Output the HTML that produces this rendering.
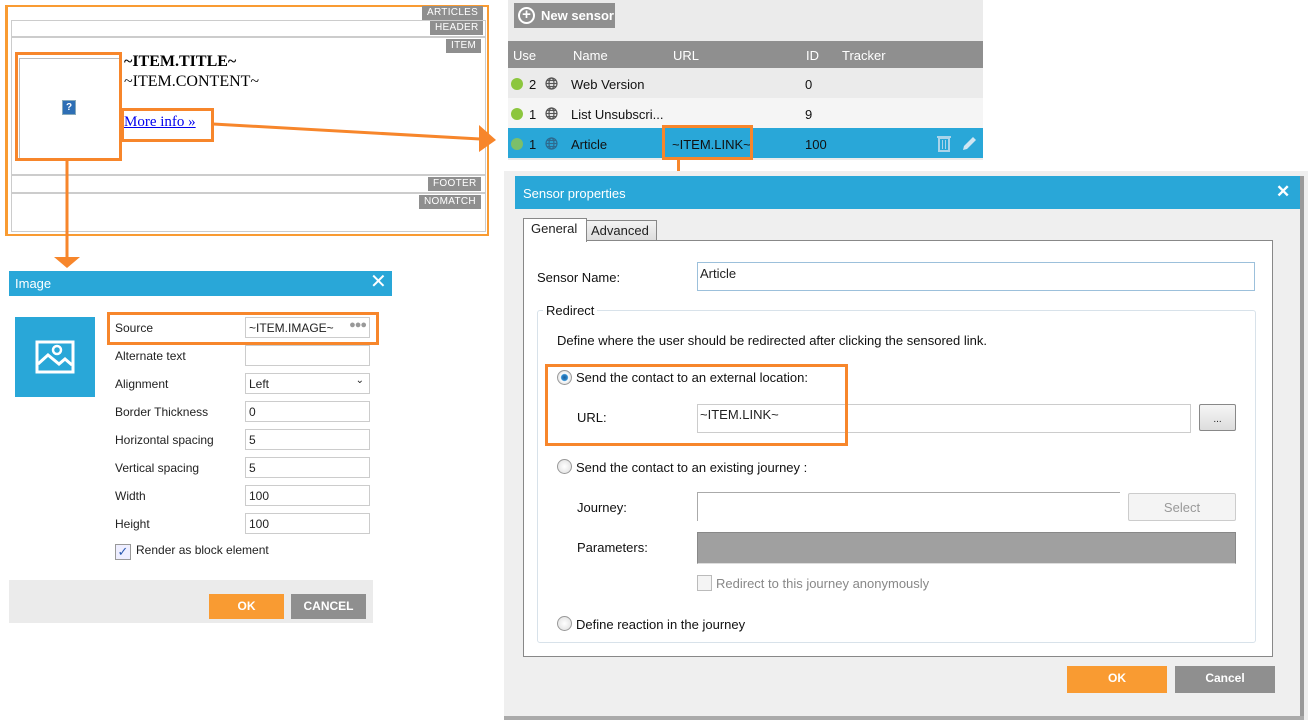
<!DOCTYPE html>
<html><head><meta charset="utf-8"><style>
*{margin:0;padding:0;box-sizing:border-box}
body{width:1308px;height:720px;background:#fff;position:relative;overflow:hidden;font-family:"Liberation Sans",sans-serif;font-size:12px;color:#222}
.a{position:absolute}
.tag{position:absolute;background:#8f8f8f;color:#fff;font-size:10px;height:14px;line-height:14px;padding:0 5px;letter-spacing:.3px}
.ser{font-family:"Liberation Serif",serif}
.lbl{position:absolute;left:115px;font-size:12px;color:#222}
.inp{position:absolute;left:245px;width:125px;height:21px;border:1px solid #ccc;font-size:12px;padding:3px 3px;background:#fff}
.obox{position:absolute;border:3px solid #f7862b}
.s{font-size:13px;color:#111}
.radio{position:absolute;width:15px;height:15px;border-radius:50%;border:1px solid #999;background:radial-gradient(#fff,#ddd)}
</style></head><body>

<div class="a" style="left:5px;top:5px;width:484px;height:231px;border:2px solid #f99b32;border-left-width:3px"></div>
<div class="tag" style="left:422px;top:6px">ARTICLES</div>
<div class="a" style="left:11px;top:20px;width:475px;height:18px;border:1px solid #ccc;border-bottom-width:2px"></div>
<div class="tag" style="left:430px;top:21px">HEADER</div>
<div class="a" style="left:11px;top:38px;width:475px;height:138px;border:1px solid #ccc;border-top:none;border-bottom-width:2px"></div>
<div class="tag" style="left:446px;top:39px">ITEM</div>
<div class="a" style="left:11px;top:176px;width:475px;height:18px;border:1px solid #ccc;border-top:none;border-bottom-width:2px"></div>
<div class="tag" style="left:428px;top:177px">FOOTER</div>
<div class="a" style="left:11px;top:194px;width:475px;height:38px;border:1px solid #ccc;border-top:none"></div>
<div class="tag" style="left:419px;top:195px">NOMATCH</div>
<div class="a" style="left:19px;top:58px;width:100px;height:100px;border:1px solid #bbb;border-right:none;border-bottom:none"></div>
<div class="a" style="left:62px;top:100px;width:14px;height:15px;background:#2e6fb5;border:1px solid #8ab;color:#fff;font-size:10px;font-weight:bold;text-align:center;line-height:13px">?</div>
<div class="obox" style="left:15px;top:52px;width:107px;height:109px"></div>
<div class="a ser" style="left:124px;top:53px;font-size:16px;font-weight:bold;color:#000">~ITEM.TITLE~</div>
<div class="a ser" style="left:124px;top:73px;font-size:16px;color:#000">~ITEM.CONTENT~</div>
<div class="a ser" style="left:124px;top:114px;font-size:15px;color:#00e;text-decoration:underline">More info »</div>
<div class="obox" style="left:121px;top:108px;width:93px;height:34px"></div>
<svg class="a" style="left:0;top:0" width="520" height="280">
<polyline points="213,124 480,139" stroke="#f7862b" stroke-width="3" fill="none"/>
<polygon points="479,125 496,140 479,152" fill="#f7862b"/>
<line x1="67" y1="160" x2="67" y2="258" stroke="#f7862b" stroke-width="3"/>
<polygon points="54,257 80,257 67,268" fill="#f7862b"/>
</svg>

<div class="a" style="left:9px;top:271px;width:383px;height:25px;background:#29a7d8;color:#fff;font-size:13px;line-height:25px;padding-left:6px">Image</div>
<div class="a" style="left:370px;top:271px;color:#fff;font-size:20px;line-height:22px">✕</div>
<div class="a" style="left:15px;top:317px;width:80px;height:80px;background:#29a7d8"></div>
<svg class="a" style="left:35px;top:340px" width="40" height="34"><rect x="2" y="2" width="36" height="30" fill="none" stroke="#fff" stroke-width="3"/><circle cx="22" cy="10" r="4" fill="none" stroke="#fff" stroke-width="2.5"/><polyline points="3,24 13,15 24,24 30,19 37,25" fill="none" stroke="#fff" stroke-width="3"/></svg>
<div class="lbl" style="top:321px">Source</div>
<div class="inp" style="top:317px">~ITEM.IMAGE~<span style="position:absolute;right:3px;top:1px;color:#999;font-size:11px;letter-spacing:-1px">●●●</span></div>
<div class="obox" style="left:107px;top:312px;width:272px;height:33px"></div>
<div class="lbl" style="top:349px">Alternate text</div><div class="inp" style="top:345px"></div>
<div class="lbl" style="top:377px">Alignment</div><div class="inp" style="top:373px">Left<span style="position:absolute;right:5px;top:1px;font-size:10px">⌄</span></div>
<div class="lbl" style="top:405px">Border Thickness</div><div class="inp" style="top:401px">0</div>
<div class="lbl" style="top:433px">Horizontal spacing</div><div class="inp" style="top:429px">5</div>
<div class="lbl" style="top:461px">Vertical spacing</div><div class="inp" style="top:457px">5</div>
<div class="lbl" style="top:489px">Width</div><div class="inp" style="top:485px">100</div>
<div class="lbl" style="top:517px">Height</div><div class="inp" style="top:513px">100</div>
<div class="a" style="left:115px;top:544px;width:16px;height:16px;border:1px solid #999;background:#eef;color:#2a5ab0;font-size:13px;line-height:14px;text-align:center">✓</div>
<div class="a" style="left:136px;top:543px;font-size:12px">Render as block element</div>
<div class="a" style="left:9px;top:580px;width:364px;height:43px;background:#ebebeb"></div>
<div class="a" style="left:209px;top:594px;width:75px;height:25px;background:#f99b32;color:#fff;font-weight:bold;text-align:center;line-height:25px">OK</div>
<div class="a" style="left:291px;top:594px;width:75px;height:25px;background:#8f8f8f;color:#fff;font-weight:bold;text-align:center;line-height:25px">CANCEL</div>

<div class="a" style="left:508px;top:0;width:475px;height:160px;background:#ebebeb"></div>
<div class="a" style="left:514px;top:3px;width:101px;height:25px;background:#8f8f8f;color:#fff;font-weight:bold;font-size:13px;line-height:25px;padding-left:27px">New sensor</div>
<div class="a" style="left:518px;top:7px;width:17px;height:17px;border:2px solid #fff;border-radius:50%;color:#fff;font-size:15px;line-height:12px;text-align:center;font-weight:bold">+</div>
<div class="a" style="left:508px;top:41px;width:475px;height:27px;background:#8f8f8f;color:#fff;font-size:13px"><span class="a" style="left:5px;top:7px">Use</span><span class="a" style="left:65px;top:7px">Name</span><span class="a" style="left:165px;top:7px">URL</span><span class="a" style="left:298px;top:7px">ID</span><span class="a" style="left:334px;top:7px">Tracker</span></div>
<div class="a" style="left:508px;top:68px;width:475px;height:30px;background:#ebebeb"></div>
<div class="a" style="left:508px;top:98px;width:475px;height:30px;background:#f5f5f5"></div>
<div class="a" style="left:508px;top:128px;width:475px;height:30px;background:#29a7d8"></div>
<div class="a" style="left:511px;top:78px;width:12px;height:12px;border-radius:50%;background:#8cc63e"></div>
<div class="a" style="left:511px;top:108px;width:12px;height:12px;border-radius:50%;background:#8cc63e"></div>
<div class="a" style="left:511px;top:138px;width:12px;height:12px;border-radius:50%;background:#7cbf6a"></div>
<div class="a s" style="left:529px;top:77px">2</div><div class="a s" style="left:529px;top:107px">1</div><div class="a s" style="left:529px;top:137px">1</div>
<svg class="a" style="left:545px;top:77px" width="13" height="13"><g fill="none" stroke="#555" stroke-width="1.2"><circle cx="6.5" cy="6.5" r="5.5"/><ellipse cx="6.5" cy="6.5" rx="2.5" ry="5.5"/><line x1="1" y1="6.5" x2="12" y2="6.5"/><line x1="2" y1="3.5" x2="11" y2="3.5"/><line x1="2" y1="9.5" x2="11" y2="9.5"/></g></svg>
<svg class="a" style="left:545px;top:107px" width="13" height="13"><g fill="none" stroke="#555" stroke-width="1.2"><circle cx="6.5" cy="6.5" r="5.5"/><ellipse cx="6.5" cy="6.5" rx="2.5" ry="5.5"/><line x1="1" y1="6.5" x2="12" y2="6.5"/><line x1="2" y1="3.5" x2="11" y2="3.5"/><line x1="2" y1="9.5" x2="11" y2="9.5"/></g></svg>
<svg class="a" style="left:545px;top:137px" width="13" height="13"><g fill="none" stroke="#2d6a8f" stroke-width="1.2"><circle cx="6.5" cy="6.5" r="5.5"/><ellipse cx="6.5" cy="6.5" rx="2.5" ry="5.5"/><line x1="1" y1="6.5" x2="12" y2="6.5"/><line x1="2" y1="3.5" x2="11" y2="3.5"/><line x1="2" y1="9.5" x2="11" y2="9.5"/></g></svg>
<div class="a s" style="left:571px;top:77px">Web Version</div><div class="a s" style="left:805px;top:77px">0</div>
<div class="a s" style="left:571px;top:107px">List Unsubscri...</div><div class="a s" style="left:805px;top:107px">9</div>
<div class="a s" style="left:571px;top:137px">Article</div><div class="a s" style="left:672px;top:137px">~ITEM.LINK~</div><div class="a s" style="left:805px;top:137px">100</div>
<svg class="a" style="left:936px;top:134px" width="44" height="18"><rect x="3" y="4" width="10" height="13" fill="none" stroke="#a9d4ea" stroke-width="2"/><rect x="1" y="2" width="14" height="2" fill="#a9d4ea"/><line x1="6.5" y1="6" x2="6.5" y2="15" stroke="#a9d4ea"/><line x1="9.5" y1="6" x2="9.5" y2="15" stroke="#a9d4ea"/><path d="M27 16 L28 12 L37 3 L40 6 L31 15 Z" fill="#cfe6f2"/></svg>
<div class="obox" style="left:662px;top:125px;width:91px;height:35px"></div>
<div class="a" style="left:677px;top:160px;width:3px;height:206px;background:#f7862b"></div>

<div class="a" style="left:504px;top:171px;width:804px;height:549px;background:#efefef"></div>
<div class="a" style="left:1300px;top:176px;width:4px;height:544px;background:#999"></div>
<div class="a" style="left:504px;top:716px;width:800px;height:4px;background:#aaa"></div>
<div class="a" style="left:515px;top:176px;width:785px;height:33px;background:#29a7d8;color:#fff;font-size:13px;line-height:36px;padding-left:8px">Sensor properties</div>
<div class="a" style="left:1276px;top:182px;color:#fff;font-size:17px;font-weight:bold">✕</div>
<div class="a" style="left:523px;top:240px;width:750px;height:417px;border:1px solid #888;background:#fff"></div>
<div class="a" style="left:586px;top:220px;width:71px;height:21px;border:1px solid #888;background:linear-gradient(#f3f3f3,#ddd);font-size:13px;padding:2px 4px">Advanced</div>
<div class="a" style="left:523px;top:218px;width:64px;height:24px;border:1px solid #888;border-bottom:none;background:#fff;font-size:13px;padding:2px 7px">General</div>
<div class="a s" style="left:537px;top:270px">Sensor Name:</div>
<div class="a" style="left:697px;top:262px;width:558px;height:29px;border:1px solid #9cc0db;font-size:13px;padding:3px 2px">Article</div>
<div class="a" style="left:537px;top:310px;width:719px;height:333px;border:1px solid #d8e2ea;border-radius:3px"></div>
<div class="a s" style="left:543px;top:303px;background:#fff;padding:0 3px">Redirect</div>
<div class="a s" style="left:557px;top:333px">Define where the user should be redirected after clicking the sensored link.</div>
<div class="radio" style="left:557px;top:370px;background:radial-gradient(#1e5c99 0,#2a8ad0 3px,#fff 4px,#ddd 7px)"></div>
<div class="a s" style="left:576px;top:370px">Send the contact to an external location:</div>
<div class="a s" style="left:577px;top:410px">URL:</div>
<div class="a" style="left:697px;top:404px;width:494px;height:29px;border:1px solid #ccc;font-size:13px;padding:2px 2px">~ITEM.LINK~</div>
<div class="a" style="left:1199px;top:404px;width:37px;height:27px;border:1px solid #888;border-radius:2px;background:linear-gradient(#f5f5f5,#ddd);font-size:10px;text-align:center;line-height:30px">...</div>
<div class="obox" style="left:545px;top:364px;width:303px;height:82px"></div>
<div class="radio" style="left:557px;top:459px"></div>
<div class="a s" style="left:576px;top:460px">Send the contact to an existing journey :</div>
<div class="a s" style="left:577px;top:500px">Journey:</div>
<div class="a" style="left:697px;top:492px;width:423px;height:29px;border-top:1px solid #aaa;border-left:1px solid #aaa"></div>
<div class="a" style="left:1128px;top:493px;width:108px;height:28px;border:1px solid #ccc;border-radius:2px;background:#f4f4f4;color:#999;font-size:13px;text-align:center;line-height:28px">Select</div>
<div class="a s" style="left:577px;top:540px">Parameters:</div>
<div class="a" style="left:697px;top:532px;width:539px;height:32px;background:#a0a0a0;border:1px solid #888;border-bottom-color:#ddd"></div>
<div class="a" style="left:697px;top:575px;width:15px;height:16px;border:1px solid #bbb;background:#f4f4f4"></div>
<div class="a" style="left:716px;top:576px;font-size:13px;color:#888">Redirect to this journey anonymously</div>
<div class="radio" style="left:557px;top:616px"></div>
<div class="a s" style="left:576px;top:617px">Define reaction in the journey</div>
<div class="a" style="left:1067px;top:666px;width:100px;height:27px;background:#f99b32;color:#fff;font-weight:bold;text-align:center;line-height:25px">OK</div>
<div class="a" style="left:1175px;top:666px;width:100px;height:27px;background:#8f8f8f;color:#fff;font-weight:bold;text-align:center;line-height:25px">Cancel</div>
</body></html>
